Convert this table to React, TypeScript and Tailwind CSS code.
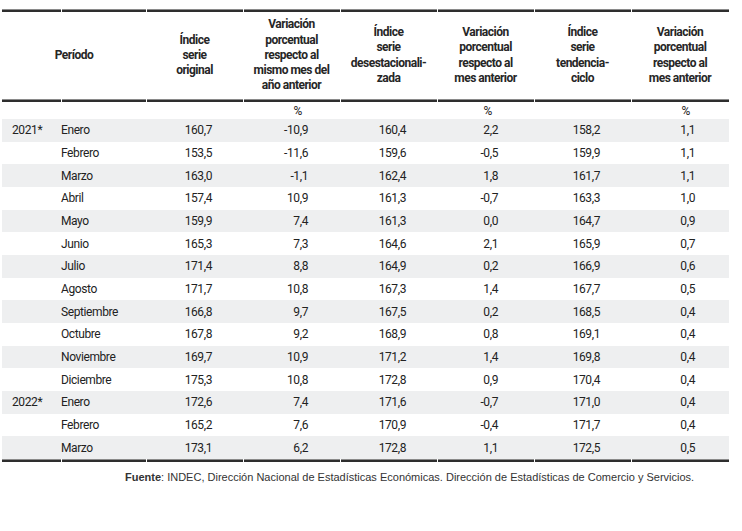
import React from "react";

const cols = "grid grid-cols-[59px_85px_97px_97px_97px_97px_97px_98px]";

type Row = [string, string, string, string, string, string, string, string];

const rows: Row[] = [
  ["2021*", "Enero", "160,7", "-10,9", "160,4", "2,2", "158,2", "1,1"],
  ["", "Febrero", "153,5", "-11,6", "159,6", "-0,5", "159,9", "1,1"],
  ["", "Marzo", "163,0", "-1,1", "162,4", "1,8", "161,7", "1,1"],
  ["", "Abril", "157,4", "10,9", "161,3", "-0,7", "163,3", "1,0"],
  ["", "Mayo", "159,9", "7,4", "161,3", "0,0", "164,7", "0,9"],
  ["", "Junio", "165,3", "7,3", "164,6", "2,1", "165,9", "0,7"],
  ["", "Julio", "171,4", "8,8", "164,9", "0,2", "166,9", "0,6"],
  ["", "Agosto", "171,7", "10,8", "167,3", "1,4", "167,7", "0,5"],
  ["", "Septiembre", "166,8", "9,7", "167,5", "0,2", "168,5", "0,4"],
  ["", "Octubre", "167,8", "9,2", "168,9", "0,8", "169,1", "0,4"],
  ["", "Noviembre", "169,7", "10,9", "171,2", "1,4", "169,8", "0,4"],
  ["", "Diciembre", "175,3", "10,8", "172,8", "0,9", "170,4", "0,4"],
  ["2022*", "Enero", "172,6", "7,4", "171,6", "-0,7", "171,0", "0,4"],
  ["", "Febrero", "165,2", "7,6", "170,9", "-0,4", "171,7", "0,4"],
  ["", "Marzo", "173,1", "6,2", "172,8", "1,1", "172,5", "0,5"],
];

function Rule() {
  return (
    <div className={`${cols} h-[3px]`}>
      <div className="h-[3px] border-t border-[#8a8a8a] bg-[#2e2e2e]" />
      <div className="ml-px h-[3px] border-t border-[#8a8a8a] bg-[#2e2e2e]" />
      <div className="ml-px h-[3px] border-t border-[#8a8a8a] bg-[#2e2e2e]" />
      <div className="ml-px h-[3px] border-t border-[#8a8a8a] bg-[#2e2e2e]" />
      <div className="ml-px h-[3px] border-t border-[#8a8a8a] bg-[#2e2e2e]" />
      <div className="ml-px h-[3px] border-t border-[#8a8a8a] bg-[#2e2e2e]" />
      <div className="ml-px h-[3px] border-t border-[#8a8a8a] bg-[#2e2e2e]" />
      <div className="ml-px h-[3px] border-t border-[#8a8a8a] bg-[#2e2e2e]" />
    </div>
  );
}

function H({ lines }: { lines: string[] }) {
  return (
    <div className="flex flex-col items-center justify-center text-center">
      {lines.map((l, i) => (
        <span key={i}>{l}</span>
      ))}
    </div>
  );
}

export default function App() {
  return (
    <div className="w-[742px] h-[531px] bg-white pt-[9px] pl-[2px] font-['Roboto',sans-serif] text-[#222]">
      <div className="w-[727px]">
        <Rule />
        <div className={`${cols} h-[87px] items-center text-[12px] font-bold leading-[15.3px] tracking-[-0.5px] text-[#262626]`}>
          <div className="col-span-2 text-center">Período</div>
          <H lines={["Índice", "serie", "original"]} />
          <H lines={["Variación", "porcentual", "respecto al", "mismo mes del", "año anterior"]} />
          <H lines={["Índice", "serie", "desestacionali-", "zada"]} />
          <H lines={["Variación", "porcentual", "respecto al", "mes anterior"]} />
          <H lines={["Índice", "serie", "tendencia-", "ciclo"]} />
          <H lines={["Variación", "porcentual", "respecto al", "mes anterior"]} />
        </div>
        <Rule />
        <div className={`${cols} h-[17px] items-center text-[12px] tracking-[-0.4px]`}>
          <div />
          <div />
          <div />
          <div className="text-right pr-[38px]">%</div>
          <div />
          <div className="text-right pr-[42px]">%</div>
          <div />
          <div className="text-right pr-[39px]">%</div>
        </div>
        <div className="flex flex-col text-[12px] tracking-[-0.4px]">
          {rows.map((r, i) => (
            <div
              key={i}
              className={`${cols} h-[22.67px] items-center ${i % 2 === 0 ? "bg-[#eeeff0]" : "bg-white"}`}
            >
              <div className="pl-[10px]">{r[0]}</div>
              <div>{r[1]}</div>
              <div className="text-right pr-[31px]">{r[2]}</div>
              <div className="text-right pr-[32px]">{r[3]}</div>
              <div className="text-right pr-[31px]">{r[4]}</div>
              <div className="text-right pr-[36px]">{r[5]}</div>
              <div className="text-right pr-[31px]">{r[6]}</div>
              <div className="text-right pr-[34px]">{r[7]}</div>
            </div>
          ))}
        </div>
        <Rule />
      </div>
      <div className="pl-[123px] pt-[9px] font-['Liberation_Sans',Arial,sans-serif] text-[11px] leading-[13px] text-[#333]">
        <span className="font-bold">Fuente</span>: INDEC, Dirección Nacional de Estadísticas Económicas. Dirección de Estadísticas de Comercio y Servicios.
      </div>
    </div>
  );
}
